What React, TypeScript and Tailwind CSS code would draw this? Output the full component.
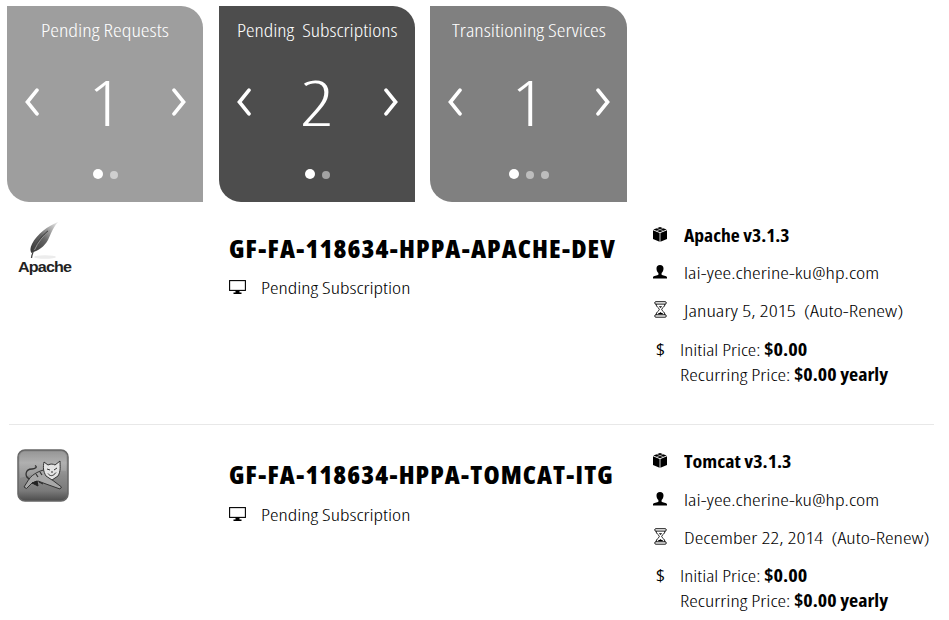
import { useLayoutEffect, useRef, useState } from "react";
import type { ReactNode } from "react";

/* Condenses a line of text to a given width. */
function Fit({ w, children }: { w: number; children: ReactNode }) {
  const ref = useRef<HTMLSpanElement>(null);
  const [scale, setScale] = useState(1);
  useLayoutEffect(() => {
    if (ref.current) setScale(w / ref.current.offsetWidth);
  }, [w]);
  return (
    <span className="block" style={{ width: w }}>
      <span
        ref={ref}
        className="inline-block origin-left whitespace-pre"
        style={{ transform: `scaleX(${scale})` }}
      >
        {children}
      </span>
    </span>
  );
}

function Chevron({ flip }: { flip?: boolean }) {
  return (
    <svg width="14" height="28" viewBox="0 0 14 28" className={flip ? "-scale-x-100" : ""}>
      <path d="M12 2.200 L2.400 14 L12 25.800" fill="none" stroke="#fff" strokeWidth="3.6" strokeLinecap="round" strokeLinejoin="miter" />
    </svg>
  );
}

type CardProps = {
  title: string;
  titleWidth: number;
  value: string;
  valueWidth: number;
  dots: number;
  className: string;
  dotClass: string;
};

function Card({ title, titleWidth, value, valueWidth, dots, className, dotClass }: CardProps) {
  return (
    <div className={`flex h-[196px] flex-col items-center rounded-tr-[22px] rounded-bl-[22px] text-white ${className}`}>
      <div className="mt-[11px] text-[18px] leading-[26px] font-light">
        <Fit w={titleWidth}>{title}</Fit>
      </div>
      <div className="mt-[19px] flex h-[80px] w-full items-center justify-between pr-[17px] pl-[18px]">
        <Chevron />
        <div className="pr-[2px] text-[63px] leading-[80px] font-light">
          <Fit w={valueWidth}>{value}</Fit>
        </div>
        <Chevron flip />
      </div>
      <div className="mt-[27px] flex h-[10px] items-center gap-[7px]">
        <span className="size-[10px] rounded-full bg-white" />
        {Array.from({ length: dots - 1 }, (_, i) => (
          <span key={i} className={`mt-px size-[8px] rounded-full ${dotClass}`} />
        ))}
      </div>
    </div>
  );
}

function Monitor() {
  return (
    <svg width="17" height="15" viewBox="0 0 17 15">
      <rect x="0.6" y="0.6" width="15.8" height="9.8" fill="none" stroke="#000" strokeWidth="1.1" />
      <path d="M6.500 10.500h4v2h2V14h-8v-1.500h2z" />
    </svg>
  );
}

function Cube() {
  return (
    <svg width="14" height="15" viewBox="0 0 14 15">
      <path d="M7 0 L13.600 2.500 L7 5.200 L0.400 2.500z" />
      <path d="M0 3.300 L6.600 5.900 V14.800 L0 12z M14 3.300 L7.400 5.900 V14.800 L14 12z" />
      <path d="M3.600 1.200L10.600 4.100M10.400 1.200L3.400 4.100" fill="none" stroke="#fff" strokeWidth="0.5" />
    </svg>
  );
}

function Person() {
  return (
    <svg width="14" height="14" viewBox="0 0 14 14">
      <path d="M7 0C9.300 0 10.500 1.300 10.500 3.400C10.500 5.600 9.600 7 8.600 7.900V9.700C9.500 10.700 13.800 10.600 14 12.300V13.600H0V12.300C.2 10.600 4.500 10.700 5.400 9.700V7.900C4.400 7 3.500 5.600 3.500 3.400C3.500 1.300 4.700 0 7 0z" />
    </svg>
  );
}

function Hourglass() {
  return (
    <svg width="13" height="17" viewBox="0 0 13 17" fill="none" stroke="#000" strokeWidth="0.9">
      <rect x="0.7" y="0.7" width="11.600" height="2.400" rx="1.200" />
      <rect x="0.7" y="13.800" width="11.600" height="2.400" rx="1.200" />
      <path d="M2 3C2 6 5.300 7 5.300 8.400C5.300 9.900 2 10.900 2 14M11 3C11 6 7.700 7 7.700 8.400C7.700 9.900 11 10.900 11 14" />
      <path d="M4.800 5.300h3.400L6.500 7z" fill="#000" stroke="none" />
      <path d="M3.500 13.300C4 11.800 6 12.300 6.500 11C7 12.300 9 11.800 9.500 13.300z" fill="#000" stroke="none" />
    </svg>
  );
}

function ApacheLogo() {
  return (
    <div className="flex w-[56px] flex-col items-center">
      <svg width="54" height="38" viewBox="0 0 54 38">
        <defs>
          <linearGradient id="feather" x1="0" y1="1" x2="0.9" y2="0">
            <stop offset="0" stopColor="#333" />
            <stop offset="0.5" stopColor="#666" />
            <stop offset="1" stopColor="#e0e0e0" />
          </linearGradient>
        </defs>
        <ellipse cx="28" cy="35" rx="11" ry="1.800" fill="#ececec" />
        <path d="M41 0C31 4 20 12 15 22C13 26 13 29 14.500 31C22 28 27 25 31 18C34 12 35 7 41 0z" fill="url(#feather)" />
        <path d="M31 9C24 15 16 24 14.500 36" fill="none" stroke="#444" strokeWidth="1.300" />
        <path d="M33 8C26 14 21 20 17.500 28" fill="none" stroke="#999" strokeWidth="0.9" />
      </svg>
      <div className="-mt-[2px] font-['Liberation_Sans',Arial,sans-serif] text-[15.5px] leading-[17px] font-bold tracking-[-0.8px] text-[#222]">
        <Fit w={53}>Apache</Fit>
      </div>
    </div>
  );
}

function TomcatLogo() {
  return (
    <svg width="52" height="53" viewBox="0 0 52 53" className="ml-px">
      <defs>
        <linearGradient id="tile" x1="0" y1="0" x2="0" y2="1">
          <stop offset="0" stopColor="#858585" />
          <stop offset="0.25" stopColor="#a5a5a5" />
          <stop offset="0.5" stopColor="#8c8c8c" />
          <stop offset="0.8" stopColor="#7a7a7a" />
          <stop offset="1" stopColor="#4c4c4c" />
        </linearGradient>
      </defs>
      <rect x="1" y="1" width="50" height="51" rx="7" fill="url(#tile)" stroke="#666" strokeWidth="1.500" />
      <path d="M3 8C3 4 5 2.500 9 2.500H43C47 2.500 49 4 49 8V22C35 21 20 24 3 29z" fill="#fff" opacity="0.12" />
      <path d="M27 21C22 22 16 25 12 30L7 38L9.500 39.500L15 34L21 32L29 35L43 40L44.500 38L34 30z" fill="#a8a8a8" stroke="#333" strokeWidth="1" />
      <path d="M13 30C7 28 8 20 15 20C18 20 21 18 18 16.500" fill="none" stroke="#333" strokeWidth="1.300" />
      <path d="M19 25l2 3M23 23l2 3" stroke="#333" strokeWidth="1.200" />
      <path d="M15 34l5-2 1 5zM22 33l4 2" fill="#222" stroke="#222" strokeWidth="1" />
      <path d="M27 13L31 16C34 14.500 36 15 38 16L43 12C43 17 44 22 41 27L35 31L29 27C26 22 26 18 27 13z" fill="#e4e4e4" stroke="#333" strokeWidth="1" />
      <path d="M30 20l3 1M37 21l3-2M31 24.500c2 3 5 3 8-1M34 23l2 0" fill="none" stroke="#333" strokeWidth="1" />
    </svg>
  );
}

type Item = {
  logo: ReactNode;
  name: string;
  nameWidth: number;
  product: string;
  productWidth: number;
  date: string;
  dateWidth: number;
  productClass: string;
  priceClass: string;
  nameClass: string;
};

function Row({ item }: { item: Item }) {
  return (
    <div className="flex h-[226px] items-start pt-[18px] pl-[16px] text-black">
      <div className="-mt-px w-[213px]">{item.logo}</div>
      <div className="w-[424px] pt-[7px]">
        <h2 className={`h-[36px] text-[25px] leading-[36px] font-extrabold tracking-[1px] ${item.nameClass}`}>
          <Fit w={item.nameWidth}>{item.name}</Fit>
        </h2>
        <div className="mt-[10px] flex h-[24px] items-start text-[17px] leading-[24px] font-light">
          <div className="w-[32px] pt-[4px]"><Monitor /></div>
          <Fit w={149}>Pending Subscription</Fit>
        </div>
      </div>
      <div className="text-[17px] leading-[24px] font-light">
        <div className={`flex h-[38px] items-start ${item.productClass}`}>
          <div className="w-[31px] pt-[3px]"><Cube /></div>
          <div className="font-bold"><Fit w={item.productWidth}>{item.product}</Fit></div>
        </div>
        <div className="flex h-[38px] items-start">
          <div className="w-[31px] pt-[4px]"><Person /></div>
          <Fit w={195}>lai-yee.cherine-ku@hp.com</Fit>
        </div>
        <div className="flex h-[37px] items-start">
          <div className="w-[31px] pt-[2px] pl-px"><Hourglass /></div>
          <Fit w={item.dateWidth}>{item.date}</Fit>
        </div>
        <div className={`flex items-start ${item.priceClass}`}>
          <div className="w-[27px] pl-[3px] text-[16px] font-medium"><Fit w={9}>$</Fit></div>
          <div className="leading-[25px]">
            <div className="flex gap-[4px]">
              <Fit w={80}>Initial Price:</Fit>
              <b className="font-bold"><Fit w={43}>$0.00</Fit></b>
            </div>
            <div className="flex gap-[4px]">
              <Fit w={110}>Recurring Price:</Fit>
              <b className="font-bold"><Fit w={94}>$0.00 yearly</Fit></b>
            </div>
          </div>
        </div>
      </div>
    </div>
  );
}

const items: Item[] = [
  {
    logo: <ApacheLogo />,
    name: "GF-FA-118634-HPPA-APACHE-DEV",
    nameWidth: 387,
    product: "Apache v3.1.3",
    productWidth: 106,
    date: "January 5, 2015  (Auto-Renew)",
    dateWidth: 219,
    productClass: "pt-px",
    priceClass: "pt-px",
    nameClass: "",
  },
  {
    logo: <TomcatLogo />,
    name: "GF-FA-118634-HPPA-TOMCAT-ITG",
    nameWidth: 385,
    product: "Tomcat v3.1.3",
    productWidth: 108,
    date: "December 22, 2014  (Auto-Renew)",
    dateWidth: 246,
    productClass: "",
    priceClass: "",
    nameClass: "-mt-px mb-[11px]",
  },
];

export default function App() {
  return (
    <div className="h-[620px] w-[949px] overflow-hidden bg-white font-['Open_Sans','Noto_Sans',sans-serif] [font-stretch:75%]">
      <div className="flex pt-[6px] pl-[7px]">
        <Card title="Pending Requests" titleWidth={128} value="1" valueWidth={32} dots={2} className="mr-[16px] w-[196px] bg-[#9e9e9e]" dotClass="bg-[#cfcfcf]" />
        <Card title="Pending  Subscriptions" titleWidth={160} value="2" valueWidth={34} dots={2} className="mr-[15px] w-[196px] bg-[#4d4d4d]" dotClass="bg-[#a2a2a2]" />
        <Card title="Transitioning Services" titleWidth={154} value="1" valueWidth={32} dots={3} className="w-[197px] bg-[#808080]" dotClass="bg-[#bdbdbd]" />
      </div>
      <div className="pt-[3px]">
        <Row item={items[0]} />
        <div className="mr-[15px] ml-[9px] -mt-[7px] mb-[7px] h-px bg-[#e8e8e8]" />
        <Row item={items[1]} />
      </div>
    </div>
  );
}
